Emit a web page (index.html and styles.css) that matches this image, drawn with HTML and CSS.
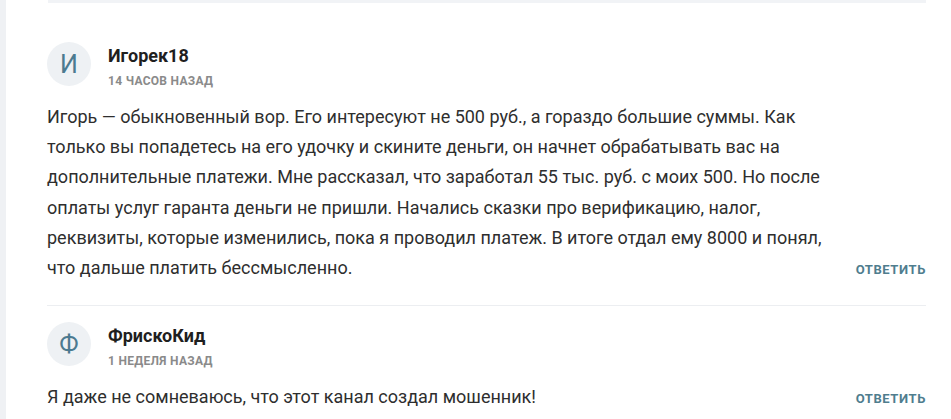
FILE: index.html
```html
<!DOCTYPE html>
<html lang="ru">
<head>
<meta charset="utf-8">
<link rel="stylesheet" href="styles.css">
</head>
<body>
<div class="page">
  <div class="side"></div>
  <main class="main">
    <div class="topbar"></div>
    <section class="comment">
      <div class="head">
        <div class="avatar">И</div>
        <div class="meta">
          <div class="name">Игорек18</div>
          <div class="date">14 часов назад</div>
        </div>
      </div>
      <div class="row">
        <p class="text">Игорь — обыкновенный вор. Его интересуют не 500 руб., а гораздо большие суммы. Как<br>только вы попадетесь на его удочку и скините деньги, он начнет обрабатывать вас на<br>дополнительные платежи. Мне рассказал, что заработал 55 тыс. руб. с моих 500. Но после<br>оплаты услуг гаранта деньги не пришли. Начались сказки про верификацию, налог,<br>реквизиты, которые изменились, пока я проводил платеж. В итоге отдал ему 8000 и понял,<br>что дальше платить бессмысленно.</p>
        <a class="reply">Ответить</a>
      </div>
    </section>
    <section class="comment">
      <div class="head">
        <div class="avatar">Ф</div>
        <div class="meta">
          <div class="name">ФрискоКид</div>
          <div class="date">1 неделя назад</div>
        </div>
      </div>
      <div class="row">
        <p class="text">Я даже не сомневаюсь, что этот канал создал мошенник!</p>
        <a class="reply">Ответить</a>
      </div>
    </section>
  </main>
</div>
</body>
</html>
```
FILE: styles.css
```css
html, body {
  margin: 0;
  padding: 0;
  background: #ffffff;
}
body {
  font-family: Roboto, "Liberation Sans", sans-serif;
  color: #2b2b2b;
}
.page {
  display: flex;
  min-height: 419px;
}
.side {
  width: 6px;
  background: #eff1f4;
  flex: none;
}
.main {
  flex: 1;
  padding: 0 25px 0 41px;
}
.topbar {
  height: 3px;
  background: #f1f3f6;
  margin: 0 0 0 1px;
}
.comment {
  padding: 39px 0 20px;
  border-bottom: 1px solid #eceef1;
}
.comment + .comment {
  padding-top: 16px;
  border-bottom: none;
}
.head {
  display: flex;
  align-items: flex-start;
  gap: 17px;
}
.avatar {
  width: 44px;
  height: 44px;
  border-radius: 50%;
  background: #eef1f4;
  color: #4c7a90;
  font-size: 25px;
  display: flex;
  align-items: center;
  justify-content: center;
  flex: none;
}
.meta {
  padding-top: 3px;
}
.name {
  font-size: 18px;
  font-weight: 700;
  line-height: 22px;
  color: #1f1f1f;
}
.date {
  margin-top: 7px;
  font-size: 12px;
  font-weight: 700;
  line-height: 15px;
  color: #8a8a8a;
  text-transform: uppercase;
  letter-spacing: 0.3px;
}
.row {
  display: flex;
  align-items: last baseline;
  justify-content: space-between;
  margin-top: 13px;
}
.text {
  margin: 0;
  font-size: 18px;
  line-height: 30.2px;
  color: #2e2e2e;
  white-space: nowrap;
}
.reply {
  font-size: 13px;
  font-weight: 700;
  line-height: 30px;
  color: #4f7d8e;
  text-transform: uppercase;
  letter-spacing: 0.6px;
  cursor: pointer;
}
```
